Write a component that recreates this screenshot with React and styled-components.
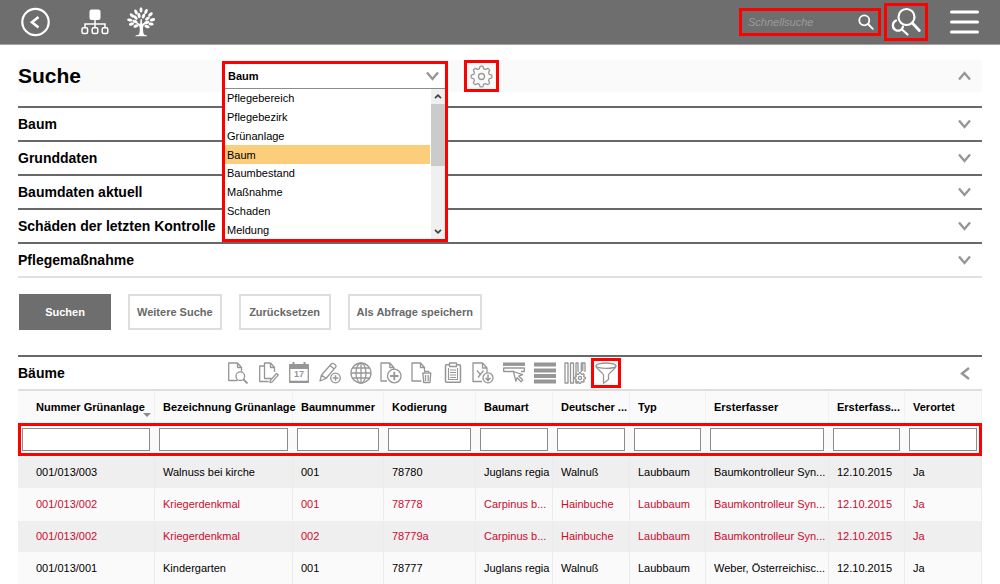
import React from "react";
import styled, { createGlobalStyle, css } from "styled-components";

const GlobalStyle = createGlobalStyle`
  *, *::before, *::after { box-sizing: border-box; }
  body {
    margin: 0;
    background: #fff;
    color: #000;
    font: 11px/16px "Liberation Sans", Arial, sans-serif;
  }
  button, input, select { font: inherit; color: inherit; margin: 0; }
  button { cursor: pointer; }
  svg { display: block; fill: none; stroke: currentColor; }
`;

const RED = "#ff0000";

const TopBar = styled.header`
  display: flex;
  align-items: center;
  justify-content: space-between;
  height: 45px;
  padding: 0 21px;
  background: #6e6e6e;
  border-bottom: 1px solid #a3a3a3;
  color: #fff;
`;

const TopNav = styled.nav`
  display: flex;
  align-items: center;
  gap: 18px;
`;

const IconButton = styled.button`
  display: flex;
  align-items: center;
  justify-content: center;
  padding: 0;
  border: 0;
  background: none;
  flex: none;
`;

const BackButton = styled(IconButton)`
  margin-right: 12px;
`;

const TopTools = styled.div`
  display: flex;
  align-items: center;
`;

const QuickSearch = styled.form`
  display: flex;
  align-items: center;
  width: 142px;
  height: 28px;
  padding-right: 4px;
  border: 3px solid ${RED};
`;

const QuickInput = styled.input`
  flex: 1;
  min-width: 0;
  height: 20px;
  padding: 0 6px;
  border: 0;
  outline: 0;
  background: none;
  &::placeholder { color: #9b9b9b; font-style: italic; opacity: 1; }
`;

const AdvancedSearch = styled(IconButton)`
  width: 44px;
  height: 38px;
  margin: 0 22px 0 3px;
  border: 3px solid ${RED};
`;

const Main = styled.main`
  padding: 15px 18px 0;
`;

const SearchHead = styled.div`
  display: grid;
  grid-template-columns: 204px 226px 1fr auto;
  align-items: center;
  height: 32px;
  margin-bottom: 14px;
  padding-right: 11px;
  background: #fafafa;
  color: #969696;
`;

const Title = styled.h1`
  margin: 0;
  font-size: 21px;
  line-height: 32px;
  color: #000;
`;

const DropdownAnchor = styled.div`
  position: relative;
  align-self: stretch;
`;

const Dropdown = styled.div`
  position: absolute;
  top: 1px;
  left: 0;
  right: 0;
  z-index: 2;
  border: 3px solid ${RED};
  background: #fff;
  color: #000;
`;

const SelectBox = styled.div`
  display: grid;
  grid-template-columns: 1fr auto;
  align-items: center;
  height: 25px;
  padding-right: 6px;
  border-bottom: 1px solid #8c8c8c;
  color: #969696;
`;

const Select = styled.select`
  appearance: none;
  width: 100%;
  height: 24px;
  padding: 0 3px;
  border: 0;
  outline: 0;
  background: none;
  color: #000;
  font-weight: bold;
`;

const ListArea = styled.div`
  display: flex;
  height: 150px;
`;

const OptionList = styled.ul`
  display: grid;
  grid-auto-rows: 1fr;
  flex: 1;
  margin: 0 1px 0 0;
  padding: 0;
  list-style: none;
`;

const Option = styled.li`
  display: flex;
  align-items: center;
  padding-left: 2px;
  background: ${(p) => (p.$active ? "#fccd7b" : "transparent")};
`;

const ScrollTrack = styled.div`
  display: flex;
  flex-direction: column;
  align-items: center;
  width: 14px;
  background: #f0f0f0;
  color: #404040;
  svg { flex: none; margin: 5px 0; }
`;

const ScrollThumb = styled.div`
  width: 100%;
  height: 62px;
  margin-bottom: auto;
  background: #cbcbcb;
`;

const GearButton = styled(IconButton)`
  width: 35px;
  height: 32px;
  margin-left: 16px;
  border: 3px solid ${RED};
  background: #fafafa;
  color: #999;
`;

const Sections = styled.div`
  margin-bottom: 16px;
  border-bottom: 2px solid #e0e0e0;
`;

const Section = styled.section`
  display: flex;
  align-items: center;
  justify-content: space-between;
  height: 34px;
  padding-right: 11px;
  border-top: 2px solid #686868;
  color: #969696;
`;

const SectionTitle = styled.h2`
  margin: 0;
  font-size: 14px;
  line-height: 20px;
  color: #000;
`;

const Actions = styled.div`
  display: flex;
  gap: 17px;
  margin-bottom: 25px;
  padding-left: 1px;
`;

const ActionButton = styled.button`
  min-width: 92px;
  height: 36px;
  padding: 0 7px;
  border: 2px solid #dedede;
  background: #fff;
  color: #686868;
  font-weight: bold;
  white-space: nowrap;
  ${(p) => p.$primary && css`
    border-color: #6e6e6e;
    background: #6e6e6e;
    color: #fff;
  `}
`;

const ResultHead = styled.div`
  display: grid;
  grid-template-columns: 209px 390px 1fr;
  align-items: center;
  height: 36px;
  padding-right: 12px;
  border-top: 2px solid #686868;
  border-bottom: 2px solid #dedede;
  color: #969696;
`;

const Toolbar = styled.div`
  display: flex;
  justify-content: space-between;
`;

const ToolButton = styled(IconButton)`
  width: 22px;
  height: 22px;
  ${(p) => p.$marked && css`
    outline: 3px solid ${RED};
    outline-offset: 1px;
  `}
`;

const CollapseButton = styled(IconButton)`
  justify-self: end;
`;

const Table = styled.table`
  width: 100%;
  table-layout: fixed;
  border-collapse: separate;
  border-spacing: 0;
  text-align: left;
  white-space: nowrap;
`;

const HeadRow = styled.tr`
  background: #fafafa;
`;

const HeadCell = styled.th`
  position: relative;
  height: 32px;
  padding: 0 0 0 8px;
  border-right: 1px solid #f2f2f2;
  &:first-child { padding-left: 18px; }
`;

const SortMark = styled.span`
  position: absolute;
  right: 3px;
  bottom: 6px;
  border: 4px solid transparent;
  border-top: 4px solid #8c8c8c;
  border-bottom: 0;
`;

const FilterRow = styled.tr`
  outline: 3px solid ${RED};
  outline-offset: -3px;
`;

const FilterCell = styled.td`
  height: 33px;
  padding: 0 5px 0 4px;
  background: #fafafa;
`;

const FilterInput = styled.input`
  display: block;
  width: 100%;
  height: 23px;
  padding: 0 3px;
  border: 1px solid #8c8c8c;
  background: #fff;
`;

const Row = styled.tr`
  color: ${(p) => (p.$alert ? "#cc0a2f" : "#000")};
  background: #fafafa;
  &:nth-child(odd) { background: #efefef; }
`;

const Cell = styled.td`
  height: 32px;
  padding: 0 0 2px 8px;
  border-top: 1px solid #fafafa;
  border-right: 1px solid #ebebeb;
  &:first-child { padding-left: 18px; }
`;

const Chevron = ({ d = "M1 1.500l5.500 6.500L12 1.500" }) => (
  <svg width="13" height="10" viewBox="0 0 13 10" strokeWidth="2.400"><path d={d} /></svg>
);
const ChevronUp = () => <Chevron d="M1 8.500l5.500-6.500 5.500 6.500" />;

const ScrollArrow = ({ down }) => (
  <svg width="8" height="5" viewBox="0 0 8 5" strokeWidth="1.700">
    <path d={down ? "M1 .8l3 3 3-3" : "M1 4.200l3-3 3 3"} />
  </svg>
);

const gearPath = (cx, cy, outer, inner, teeth) => {
  const step = (Math.PI * 2) / teeth;
  const steps = 12;
  const pts = [];
  for (let i = 0; i < teeth * steps; i++) {
    const a = (i / steps) * step - Math.PI / 2;
    const wave = Math.max(-1, Math.min(1, Math.cos(a * teeth + (Math.PI / 2) * teeth) * 1.7));
    const r = (outer + inner) / 2 + ((outer - inner) / 2) * wave;
    pts.push(`${(cx + r * Math.cos(a)).toFixed(2)} ${(cy + r * Math.sin(a)).toFixed(2)}`);
  }
  return `M${pts.join("L")}Z`;
};

const Gear = () => (
  <svg width="23" height="23" viewBox="0 0 23 23" strokeWidth="1.300" strokeLinejoin="round">
    <path d={gearPath(11.5, 11.5, 10.4, 8, 8)} />
    <circle cx="11.500" cy="11.500" r="3" />
  </svg>
);

const BackIcon = () => (
  <svg width="30" height="30" viewBox="0 0 30 30" strokeWidth="2.200">
    <circle cx="14.500" cy="15" r="13.200" />
    <path d="M17.500 10l-6.500 5.200 6.500 5.200" strokeWidth="2.600" />
  </svg>
);

const HierarchyIcon = () => (
  <svg width="28" height="26" viewBox="0 0 28 26" strokeWidth="1.500">
    <rect x="8.500" y=".5" width="11" height="10.500" rx="2" fill="currentColor" stroke="none" />
    <path d="M14 10v8M4 18.500v-3.500h20v3.500" />
    <rect x="1" y="18.800" width="5.600" height="5.600" rx="1.500" />
    <rect x="11.200" y="18.800" width="5.600" height="5.600" rx="1.500" />
    <rect x="21.200" y="18.800" width="5.600" height="5.600" rx="1.500" />
  </svg>
);

const LEAVES = [
  [14, 3, 0], [9, 5, -25], [19, 4.5, 25], [5, 8.5, -50], [23.5, 7.5, 50],
  [2.8, 13, -80], [25.5, 12.8, 75], [12, 8.5, -15], [16.5, 9, 25], [8.5, 10.5, -45],
  [20.5, 11.5, 55], [4.5, 17, -105], [24, 17, 100], [8, 14.5, -70],
  [19.8, 15.5, 70], [9, 19, -110], [20, 19.5, 105],
];

const TreeIcon = () => (
  <svg width="28" height="30" viewBox="0 0 28 30">
    <g fill="currentColor" stroke="none">
      {LEAVES.map(([x, y, a], i) => (
        <ellipse key={i} cx={x} cy={y} rx="1.500" ry="2.700" transform={`rotate(${a} ${x} ${y})`} />
      ))}
      <path d="M12.200 19l-3.700-3.500.6-.6 4 2.200.5-5h1.200l.4 5 4-2.800.6.6-3.500 4.100c-.5 3-.4 6 .6 8.600l3 .8v.9H8.500v-.9l3.500-.8c1-3 1-6 .2-8.600z" />
    </g>
  </svg>
);

const SearchIcon = () => (
  <svg width="16" height="16" viewBox="0 0 16 16" strokeWidth="1.800" strokeLinecap="round">
    <circle cx="6.300" cy="6.300" r="5" />
    <path d="M10 10l4.800 4.800" />
  </svg>
);

const DoubleSearchIcon = () => (
  <svg width="30" height="30" viewBox="0 0 30 30" strokeWidth="2.200" strokeLinecap="round">
    <circle cx="15.500" cy="10" r="8" />
    <path d="M21.300 16l7 7.500" strokeWidth="2.800" />
    <path d="M5 13.500c-4 2-4.200 7.500-.5 9.500 3.500 1.800 7-.2 7.500-3.500M11 22.500l5.500 5" />
  </svg>
);

const MenuIcon = () => (
  <svg width="29" height="24" viewBox="0 0 29 24" strokeWidth="3" strokeLinecap="round">
    <path d="M1.500 2h26M1.500 12h26M1.500 22h26" />
  </svg>
);

const ToolIcon = ({ children }) => (
  <svg width="22" height="22" viewBox="0 0 22 22" strokeWidth="1.300" strokeLinejoin="round">{children}</svg>
);

const TOOLS = [
  ["Anzeigen", <ToolIcon>
    <path d="M10.500 18.500H1.700V1h8.800l4 4.500v4M10.500 1v4.500h4" />
    <circle cx="13.300" cy="14.200" r="4.300" /><path d="M16.500 17.500l4 4" strokeWidth="1.800" />
  </ToolIcon>],
  ["Bearbeiten", <ToolIcon>
    <path d="M6.500 4H1.700v15.500h9M6.500 3v13.500h7M16.500 10V5.500l-4-4.500h-6v3M12.500 1v4.500h4" />
    <path d="M18.500 11.500l1.800 1.300-6 7-2.300.8.500-2.400z" />
  </ToolIcon>],
  ["Termine", <ToolIcon>
    <rect x="1.700" y="2.700" width="18.600" height="17.600" />
    <path d="M1.700 5h18.600" strokeWidth="4" /><path d="M1.700 19.700h18.600" strokeWidth="2" />
    <path d="M5.500 0v5M16.500 0v5" strokeWidth="2" />
    <text x="11" y="15" textAnchor="middle" fontSize="9" fontWeight="bold" fill="currentColor" stroke="none">17</text>
  </ToolIcon>],
  ["Bearbeiten und hinzufügen", <ToolIcon>
    <path d="M1 19l1.500-6L12.500 1.800c1.500-1.500 5.500 1.500 4.200 3.400L7 16.500zM11 3.500l4.300 3.500M2.500 13L7 16.500" />
    <circle cx="16.500" cy="16" r="4.800" fill="#fff" /><path d="M16.500 13.200v5.600M13.700 16h5.600" strokeWidth="1.500" />
  </ToolIcon>],
  ["Karte", <ToolIcon>
    <circle cx="11" cy="11" r="10" /><ellipse cx="11" cy="11" rx="5" ry="10" />
    <path d="M11 1v20M1 11h20M2.500 6h17M2.500 16h17" />
  </ToolIcon>],
  ["Neu", <ToolIcon>
    <path d="M7 19H1V1h8.800l4 4.500v2M9.800 1v4.500h4" />
    <circle cx="14.300" cy="14" r="6.800" /><path d="M14.300 9.800v8.400M10.100 14h8.400" strokeWidth="1.800" />
  </ToolIcon>],
  ["Löschen", <ToolIcon>
    <path d="M10.500 19H1V1h8.500l4 4.500v3.500M9.500 1v4.500h4" />
    <path d="M11 11.200h9.500M13.800 11V9.300h4V11M12 11.500l.7 9h6.300l.7-9M14.500 13v6M17.200 13v6" />
  </ToolIcon>],
  ["Liste", <ToolIcon>
    <rect x="3.500" y="2.700" width="15" height="17.600" rx="1" strokeWidth="1.500" />
    <path d="M7.500 1h7v3.500h-7z" fill="#fff" />
    <path d="M6.500 6v11.500h9V6M8 8h6M8 10.500h6M8 13h6M8 15.500h6" strokeWidth="1.100" />
  </ToolIcon>],
  ["Exportieren", <ToolIcon>
    <path d="M10 19.500H1V1h9.500l4.500 5v5M10.500 1v5H15M5 8.500l3 3.700M11.500 8.500L6 15.500" />
    <circle cx="16" cy="15.800" r="5" /><path d="M16 12.500v6M13.500 16l2.500 2.600 2.500-2.600" strokeWidth="1.500" />
  </ToolIcon>],
  ["Auswahl", <ToolIcon>
    <path d="M0 2.200h22" strokeWidth="3.400" />
    <path d="M11 9.500H.7V6h20.600v3.500H18" />
    <path d="M10.500 9.500l9 3.200-3.700 1.500 4 3.800-1.700 1.700-4-4-1.300 3.500z" fill="#fff" />
  </ToolIcon>],
  ["Zeilen", <ToolIcon>
    <path d="M0 2.500h22M0 8.500h22M0 14h22M0 19.500h22" strokeWidth="4.200" />
  </ToolIcon>],
  ["Spalten", <ToolIcon>
    <path d="M1 1h3v20H1zM6.500 1h3v20h-3zM14 10V1h-2v20h2.500M18.800 9V1h2.200v9M18.800 1h-1.500v9" />
    <path d={gearPath(16, 16, 5.4, 4.1, 8)} fill="#fff" /><circle cx="16" cy="16" r="1.600" />
  </ToolIcon>],
  ["Filter", <ToolIcon>
    <ellipse cx="11" cy="3.700" rx="10" ry="2.700" />
    <path d="M1 4.500c0 1.500 7.500 7 7.500 8.500v8.300l5-3.800V13c0-1.500 7.500-7 7.500-8.500" />
  </ToolIcon>],
];

const OPTIONS = ["Pflegebereich", "Pflegebezirk", "Grünanlage", "Baum", "Baumbestand", "Maßnahme", "Schaden", "Meldung"];
const SECTIONS = ["Baum", "Grunddaten", "Baumdaten aktuell", "Schäden der letzten Kontrolle", "Pflegemaßnahme"];

const COLUMNS = [
  ["Nummer Grünanlage", 137], ["Bezeichnung Grünanlage", 138], ["Baumnummer", 91],
  ["Kodierung", 92], ["Baumart", 77], ["Deutscher ...", 77], ["Typ", 76],
  ["Ersterfasser", 123], ["Ersterfass...", 76], ["Verortet", 77],
];

const ROWS = [
  { cells: ["001/013/003", "Walnuss bei kirche", "001", "78780", "Juglans regia", "Walnuß", "Laubbaum", "Baumkontrolleur Syn...", "12.10.2015", "Ja"] },
  { alert: true, cells: ["001/013/002", "Kriegerdenkmal", "001", "78778", "Carpinus b...", "Hainbuche", "Laubbaum", "Baumkontrolleur Syn...", "12.10.2015", "Ja"] },
  { alert: true, cells: ["001/013/002", "Kriegerdenkmal", "002", "78779a", "Carpinus b...", "Hainbuche", "Laubbaum", "Baumkontrolleur Syn...", "12.10.2015", "Ja"] },
  { cells: ["001/013/001", "Kindergarten", "001", "78777", "Juglans regia", "Walnuß", "Laubbaum", "Weber, Österreichisc...", "12.10.2015", "Ja"] },
];

export default function App() {
  const [type, setType] = React.useState("Baum");
  return (
    <>
      <GlobalStyle />
      <TopBar>
        <TopNav>
          <BackButton aria-label="Zurück"><BackIcon /></BackButton>
          <IconButton aria-label="Struktur"><HierarchyIcon /></IconButton>
          <IconButton aria-label="Baumkataster"><TreeIcon /></IconButton>
        </TopNav>
        <TopTools>
          <QuickSearch role="search" onSubmit={(e) => e.preventDefault()}>
            <QuickInput aria-label="Schnellsuche" placeholder="Schnellsuche" />
            <IconButton aria-label="Suche starten"><SearchIcon /></IconButton>
          </QuickSearch>
          <AdvancedSearch aria-label="Erweiterte Suche"><DoubleSearchIcon /></AdvancedSearch>
          <IconButton aria-label="Menü"><MenuIcon /></IconButton>
        </TopTools>
      </TopBar>
      <Main>
        <SearchHead>
          <Title>Suche</Title>
          <DropdownAnchor>
            <Dropdown>
              <SelectBox>
                <Select aria-label="Objekttyp" value={type} onChange={(e) => setType(e.target.value)}>
                  {OPTIONS.map((o) => <option key={o}>{o}</option>)}
                </Select>
                <Chevron />
              </SelectBox>
              <ListArea>
                <OptionList role="listbox" aria-label="Objekttyp">
                  {OPTIONS.map((o) => (
                    <Option key={o} role="option" aria-selected={o === type} $active={o === type} onClick={() => setType(o)}>{o}</Option>
                  ))}
                </OptionList>
                <ScrollTrack>
                  <ScrollArrow />
                  <ScrollThumb />
                  <ScrollArrow down />
                </ScrollTrack>
              </ListArea>
            </Dropdown>
          </DropdownAnchor>
          <GearButton aria-label="Einstellungen"><Gear /></GearButton>
          <IconButton aria-label="Suche zuklappen"><ChevronUp /></IconButton>
        </SearchHead>
        <Sections>
          {SECTIONS.map((s) => (
            <Section key={s}>
              <SectionTitle>{s}</SectionTitle>
              <IconButton aria-label={`${s} aufklappen`}><Chevron /></IconButton>
            </Section>
          ))}
        </Sections>
        <Actions>
          <ActionButton $primary>Suchen</ActionButton>
          <ActionButton>Weitere Suche</ActionButton>
          <ActionButton>Zurücksetzen</ActionButton>
          <ActionButton>Als Abfrage speichern</ActionButton>
        </Actions>
        <ResultHead>
          <SectionTitle>Bäume</SectionTitle>
          <Toolbar role="toolbar" aria-label="Werkzeuge">
            {TOOLS.map(([label, icon]) => (
              <ToolButton key={label} aria-label={label} $marked={label === "Filter"}>{icon}</ToolButton>
            ))}
          </Toolbar>
          <CollapseButton aria-label="Bäume einklappen">
            <svg width="10" height="13" viewBox="0 0 10 13" strokeWidth="2.400"><path d="M9 1L2 6.500 9 12" /></svg>
          </CollapseButton>
        </ResultHead>
        <Table>
          <colgroup>
            {COLUMNS.map(([name, width]) => <col key={name} width={width} />)}
          </colgroup>
          <thead>
            <HeadRow>
              {COLUMNS.map(([name], i) => (
                <HeadCell key={name} scope="col">{name}{i === 0 && <SortMark />}</HeadCell>
              ))}
            </HeadRow>
            <FilterRow>
              {COLUMNS.map(([name]) => (
                <FilterCell key={name}><FilterInput aria-label={`Filter ${name}`} /></FilterCell>
              ))}
            </FilterRow>
          </thead>
          <tbody>
            {ROWS.map((row, r) => (
              <Row key={r} $alert={row.alert}>
                {row.cells.map((c, i) => <Cell key={i}>{c}</Cell>)}
              </Row>
            ))}
          </tbody>
        </Table>
      </Main>
    </>
  );
}
